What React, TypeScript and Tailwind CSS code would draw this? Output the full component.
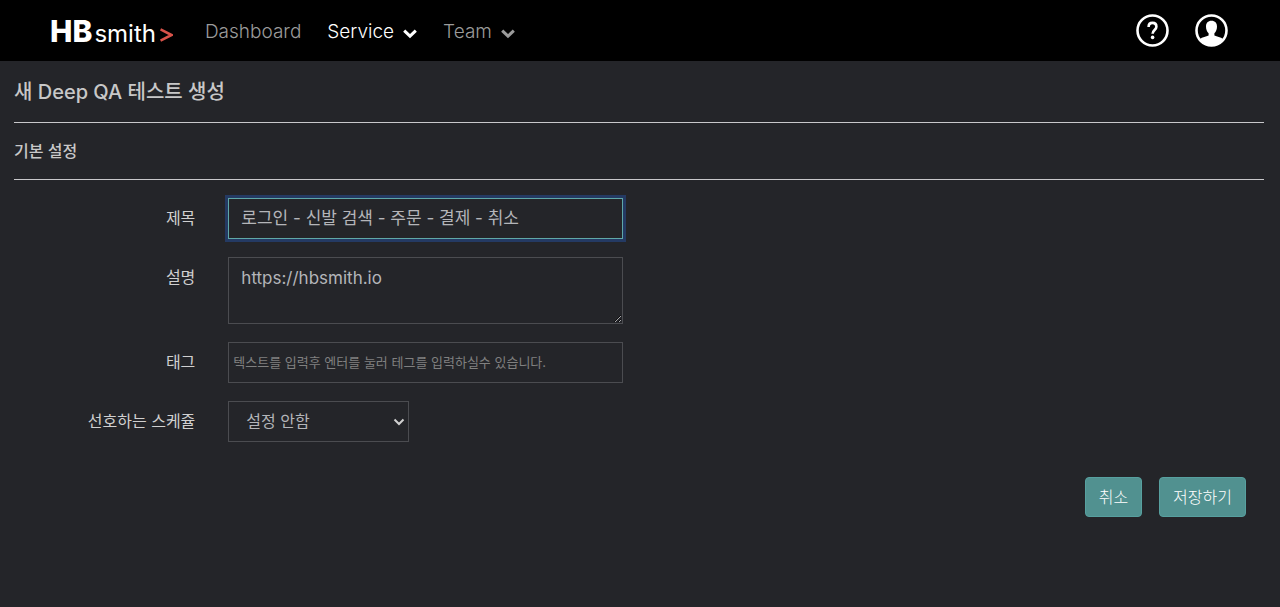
import React, { useState } from "react";

function Chevron({ className }: { className: string }) {
  return (
    <svg viewBox="0 0 14 10" className={className} fill="none" stroke="currentColor" strokeWidth="3" aria-hidden="true">
      <path d="M1.2 1.6 7 7.2l5.8-5.6" />
    </svg>
  );
}

function Header() {
  return (
    <header className="flex h-[61px] items-center justify-between bg-black pr-[52px] pl-[50px]">
      <div className="flex items-center">
        <a href="#" aria-label="HBsmith" className="mr-8 flex items-baseline pt-1 text-white">
          <span className="text-[30px] leading-8 font-extrabold">HB</span>
          <span className="ml-0.5 text-[24px] leading-8">smith</span>
          <svg viewBox="0 0 13 14" className="ml-1 h-[14px] w-[13px]" fill="none" stroke="#d9534a" strokeWidth="2.6" aria-hidden="true">
            <path d="M0.5 1.4 11.5 7 0.5 12.6" />
          </svg>
        </a>
        <nav className="flex items-center pt-0.5 text-[19px] leading-6 font-light text-[#9b9b9b]">
          <a href="#" className="mr-[26px]">Dashboard</a>
          <button type="button" className="mr-[26px] flex items-center gap-[9px] text-white">
            Service
            <Chevron className="mt-1 h-[10px] w-[14px]" />
          </button>
          <button type="button" className="flex items-center gap-[9px]">
            Team
            <Chevron className="mt-1 h-[10px] w-[14px]" />
          </button>
        </nav>
      </div>
      <div className="flex items-center gap-[26px] text-white">
        <button type="button" aria-label="도움말">
          <svg viewBox="0 0 33 33" className="size-[33px]" fill="none" stroke="currentColor" aria-hidden="true">
            <circle cx="16.5" cy="16.5" r="15" strokeWidth="2.6" />
            <path d="M12.6 13c0-2.6 1.600-4.100 3.900-4.100s3.900 1.500 3.900 3.800c0 3.200-3.800 3.400-3.800 7" strokeWidth="2.600" />
            <circle cx="16.6" cy="23.4" r="1.8" fill="currentColor" stroke="none" />
          </svg>
        </button>
        <button type="button" aria-label="내 계정">
          <svg viewBox="0 0 33 33" className="size-[33px]" fill="currentColor" aria-hidden="true">
            <circle cx="16.5" cy="16.5" r="15" fill="none" stroke="currentColor" strokeWidth="2.6" />
            <path d="M16.5 6.8c3.6 0 5.5 2.3 5.5 5.6 0 2.8-.9 5.2-2.6 6.9v2.200c2.600 1.200 6 1.500 9 3.700-2.600 4-7 6.300-11.900 6.300s-9.300-2.300-11.900-6.300c3-2.200 6.400-2.500 9-3.700v-2.200c-1.700-1.700-2.600-4.100-2.600-6.900 0-3.300 1.900-5.600 5.500-5.600z" />
          </svg>
        </button>
      </div>
    </header>
  );
}

function Field({ id, label, children }: { id: string; label: string; children: React.ReactNode }) {
  return (
    <div className="flex items-start">
      <label htmlFor={id} className="w-1/6 pt-2 pr-[18px] text-right leading-6 text-[#d0d0d0]">
        {label}
      </label>
      <div className="flex w-1/3 pr-[17px] pl-[15px]">{children}</div>
    </div>
  );
}

const box = "border border-[#4b4c50] bg-[#242529] text-[#b4b5b9] outline-none";

export default function App() {
  const [title, setTitle] = useState("로그인 - 신발 검색 - 주문 - 결제 - 취소");
  const [description, setDescription] = useState("https://hbsmith.io");
  const [tag, setTag] = useState("");

  return (
    <div className="min-h-screen bg-[#242529] font-['Inter','Noto_Sans_CJK_KR',sans-serif] text-base text-[#c8c8c8]">
      <Header />
      <main>
        <div className="pr-4 pl-[14px]">
          <h1 className="flex h-[62px] items-center border-b border-[#c8c8cb] text-xl leading-7 font-medium">새 Deep QA 테스트 생성</h1>
          <h2 className="flex h-[57px] items-center border-b border-[#c8c8cb] text-base leading-6 font-medium">기본 설정</h2>
        </div>
        <form className="pt-[18px]" onSubmit={(e) => e.preventDefault()}>
          <div className="flex flex-col gap-[18px]">
            <Field id="title" label="제목">
              <input
                id="title"
                value={title}
                onChange={(e) => setTitle(e.target.value)}
                className="h-[41px] w-full border border-[#5fa8a8] bg-[#242529] px-3 pb-1 text-[17px] text-[#b4b5b9] ring-3 ring-[#243a63] outline-none"
              />
            </Field>
            <Field id="description" label="설명">
              <textarea
                id="description"
                value={description}
                onChange={(e) => setDescription(e.target.value)}
                className={`h-[67px] w-full resize px-3 py-2 text-[17px] leading-6 ${box}`}
              />
            </Field>
            <Field id="tag" label="태그">
              <input
                id="tag"
                value={tag}
                onChange={(e) => setTag(e.target.value)}
                placeholder="텍스트를 입력후 엔터를 눌러 테그를 입력하실수 있습니다."
                className={`h-[41px] w-full px-1 pb-0.5 text-[13px] placeholder:text-[#808080] ${box}`}
              />
            </Field>
            <Field id="schedule" label="선호하는 스케쥴">
              <div className="relative w-[181px]">
                <select id="schedule" className={`h-[41px] w-full appearance-none pr-8 pb-0.5 pl-[17px] ${box}`}>
                  <option>설정 안함</option>
                </select>
                <svg viewBox="0 0 12 8" className="pointer-events-none absolute top-[17px] right-1 h-2 w-3 text-[#d0d0d0]" fill="none" stroke="currentColor" strokeWidth="2" aria-hidden="true">
                  <path d="M1.500 1.500 6 6l4.500-4.500" />
                </svg>
              </div>
            </Field>
          </div>
          <div className="mt-[35px] flex justify-end gap-[17px] pr-[34px]">
            <button type="button" className="h-10 rounded border border-[#57a09f] bg-[#519190] px-[13px] font-light text-white">취소</button>
            <button type="submit" className="h-10 rounded border border-[#57a09f] bg-[#519190] px-[13px] font-light text-white">저장하기</button>
          </div>
        </form>
      </main>
    </div>
  );
}
